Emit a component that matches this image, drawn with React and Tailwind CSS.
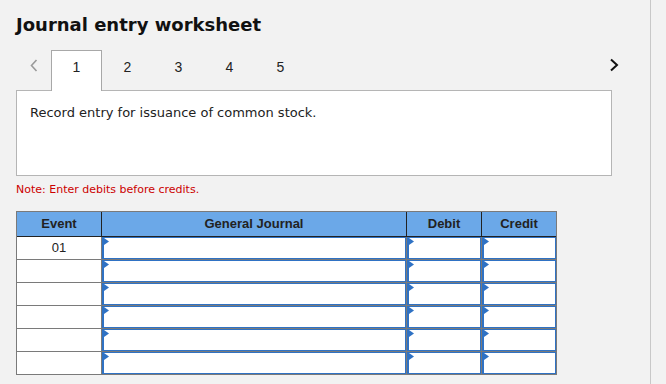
import React from "react";

const tabs = ["1", "2", "3", "4", "5"];
const rows = ["01", "", "", "", "", ""];

const Marker = () => (
  <svg
    className="absolute left-0 top-0"
    width="5"
    height="7"
    viewBox="0 0 5 7"
  >
    <polygon points="0,0 5,3.5 0,7" fill="#2f72c4" />
  </svg>
);

const InputCell = ({ width }) => (
  <div className={`${width} h-full bg-white`}>
    <div className="relative h-full border border-l-2 border-[#2f72c4] bg-white">
      <Marker />
    </div>
  </div>
);

const App = () => {
  return (
    <div className="w-[666px] h-[384px] bg-[#f2f2f2] flex overflow-hidden">
      <div className="w-[651px] h-full border-r border-[#c8c8c8] pl-[16px] pt-[14px]">
        <h1 className="font-['DejaVu_Sans',sans-serif] font-bold text-[18px] leading-[22px] text-[#111]">
          Journal entry worksheet
        </h1>

        {/* tab strip */}
        <div className="mt-[14px] w-[603px] h-[41px] -mb-px flex items-start relative z-10">
          <div className="w-[35px] h-full flex justify-center pt-[9px]">
            <svg width="8" height="13" viewBox="0 0 8 13">
              <polyline
                points="6.5,1 1.5,6.5 6.5,12"
                fill="none"
                stroke="#9a9a9a"
                strokeWidth="1.6"
              />
            </svg>
          </div>
          {tabs.map((t, i) => (
            <div
              key={t}
              className={
                i === 0
                  ? "w-[51px] h-[41px] bg-white border-t border-l border-r border-[#a8a8a8] text-center pt-[8px] font-['Liberation_Sans',Arial,sans-serif] text-[14px] leading-[16px] text-[#222]"
                  : "w-[51px] h-[41px] border-t border-transparent text-center pt-[8px] font-['Liberation_Sans',Arial,sans-serif] text-[14px] leading-[16px] text-[#222]"
              }
            >
              {t}
            </div>
          ))}
          <div className="flex-1" />
          <div className="w-[10px] pt-[8px]">
            <svg width="10" height="14" viewBox="0 0 10 14">
              <polyline
                points="2,1.5 8,7 2,12.5"
                fill="none"
                stroke="#111"
                strokeWidth="2"
              />
            </svg>
          </div>
        </div>

        <div className="w-[596px] h-[86px] bg-white border border-[#b5b5b5] pl-[13px] pt-[14px]">
          <p className="font-['DejaVu_Sans',sans-serif] text-[13px] leading-[16px] text-[#222]">
            Record entry for issuance of common stock.
          </p>
        </div>

        <p className="mt-[7px] font-['DejaVu_Sans',sans-serif] text-[11px] leading-[14px] text-[#cc0000]">
          Note: Enter debits before credits.
        </p>

        {/* journal table */}
        <div className="mt-[14px] w-[541px] border border-[#7a7a7a] bg-white font-['Liberation_Sans',Arial,sans-serif]">
          <div className="flex h-[25px] bg-[#6ba8e8] border-b border-[#222] font-bold text-[13px] text-[#222] leading-[24px]">
            <div className="w-[85px] border-r border-[#222] text-center">Event</div>
            <div className="w-[305px] border-r border-[#222] text-center">General Journal</div>
            <div className="w-[75px] border-r border-[#222] text-center">Debit</div>
            <div className="w-[74px] text-center">Credit</div>
          </div>
          {rows.map((ev, i) => (
            <div
              key={i}
              className={
                i < rows.length - 1
                  ? "flex h-[23px] border-b border-[#7a7a7a]"
                  : "flex h-[22px]"
              }
            >
              <div className="w-[85px] h-full border-r border-[#7a7a7a] text-center text-[13px] leading-[22px] text-[#222]">
                {ev}
              </div>
              <div className="w-[305px] h-full border-r border-[#7a7a7a]">
                <InputCell width="w-full" />
              </div>
              <div className="w-[75px] h-full border-r border-[#7a7a7a]">
                <InputCell width="w-full" />
              </div>
              <div className="w-[74px] h-full">
                <InputCell width="w-full" />
              </div>
            </div>
          ))}
        </div>
      </div>
    </div>
  );
};

export default App;
